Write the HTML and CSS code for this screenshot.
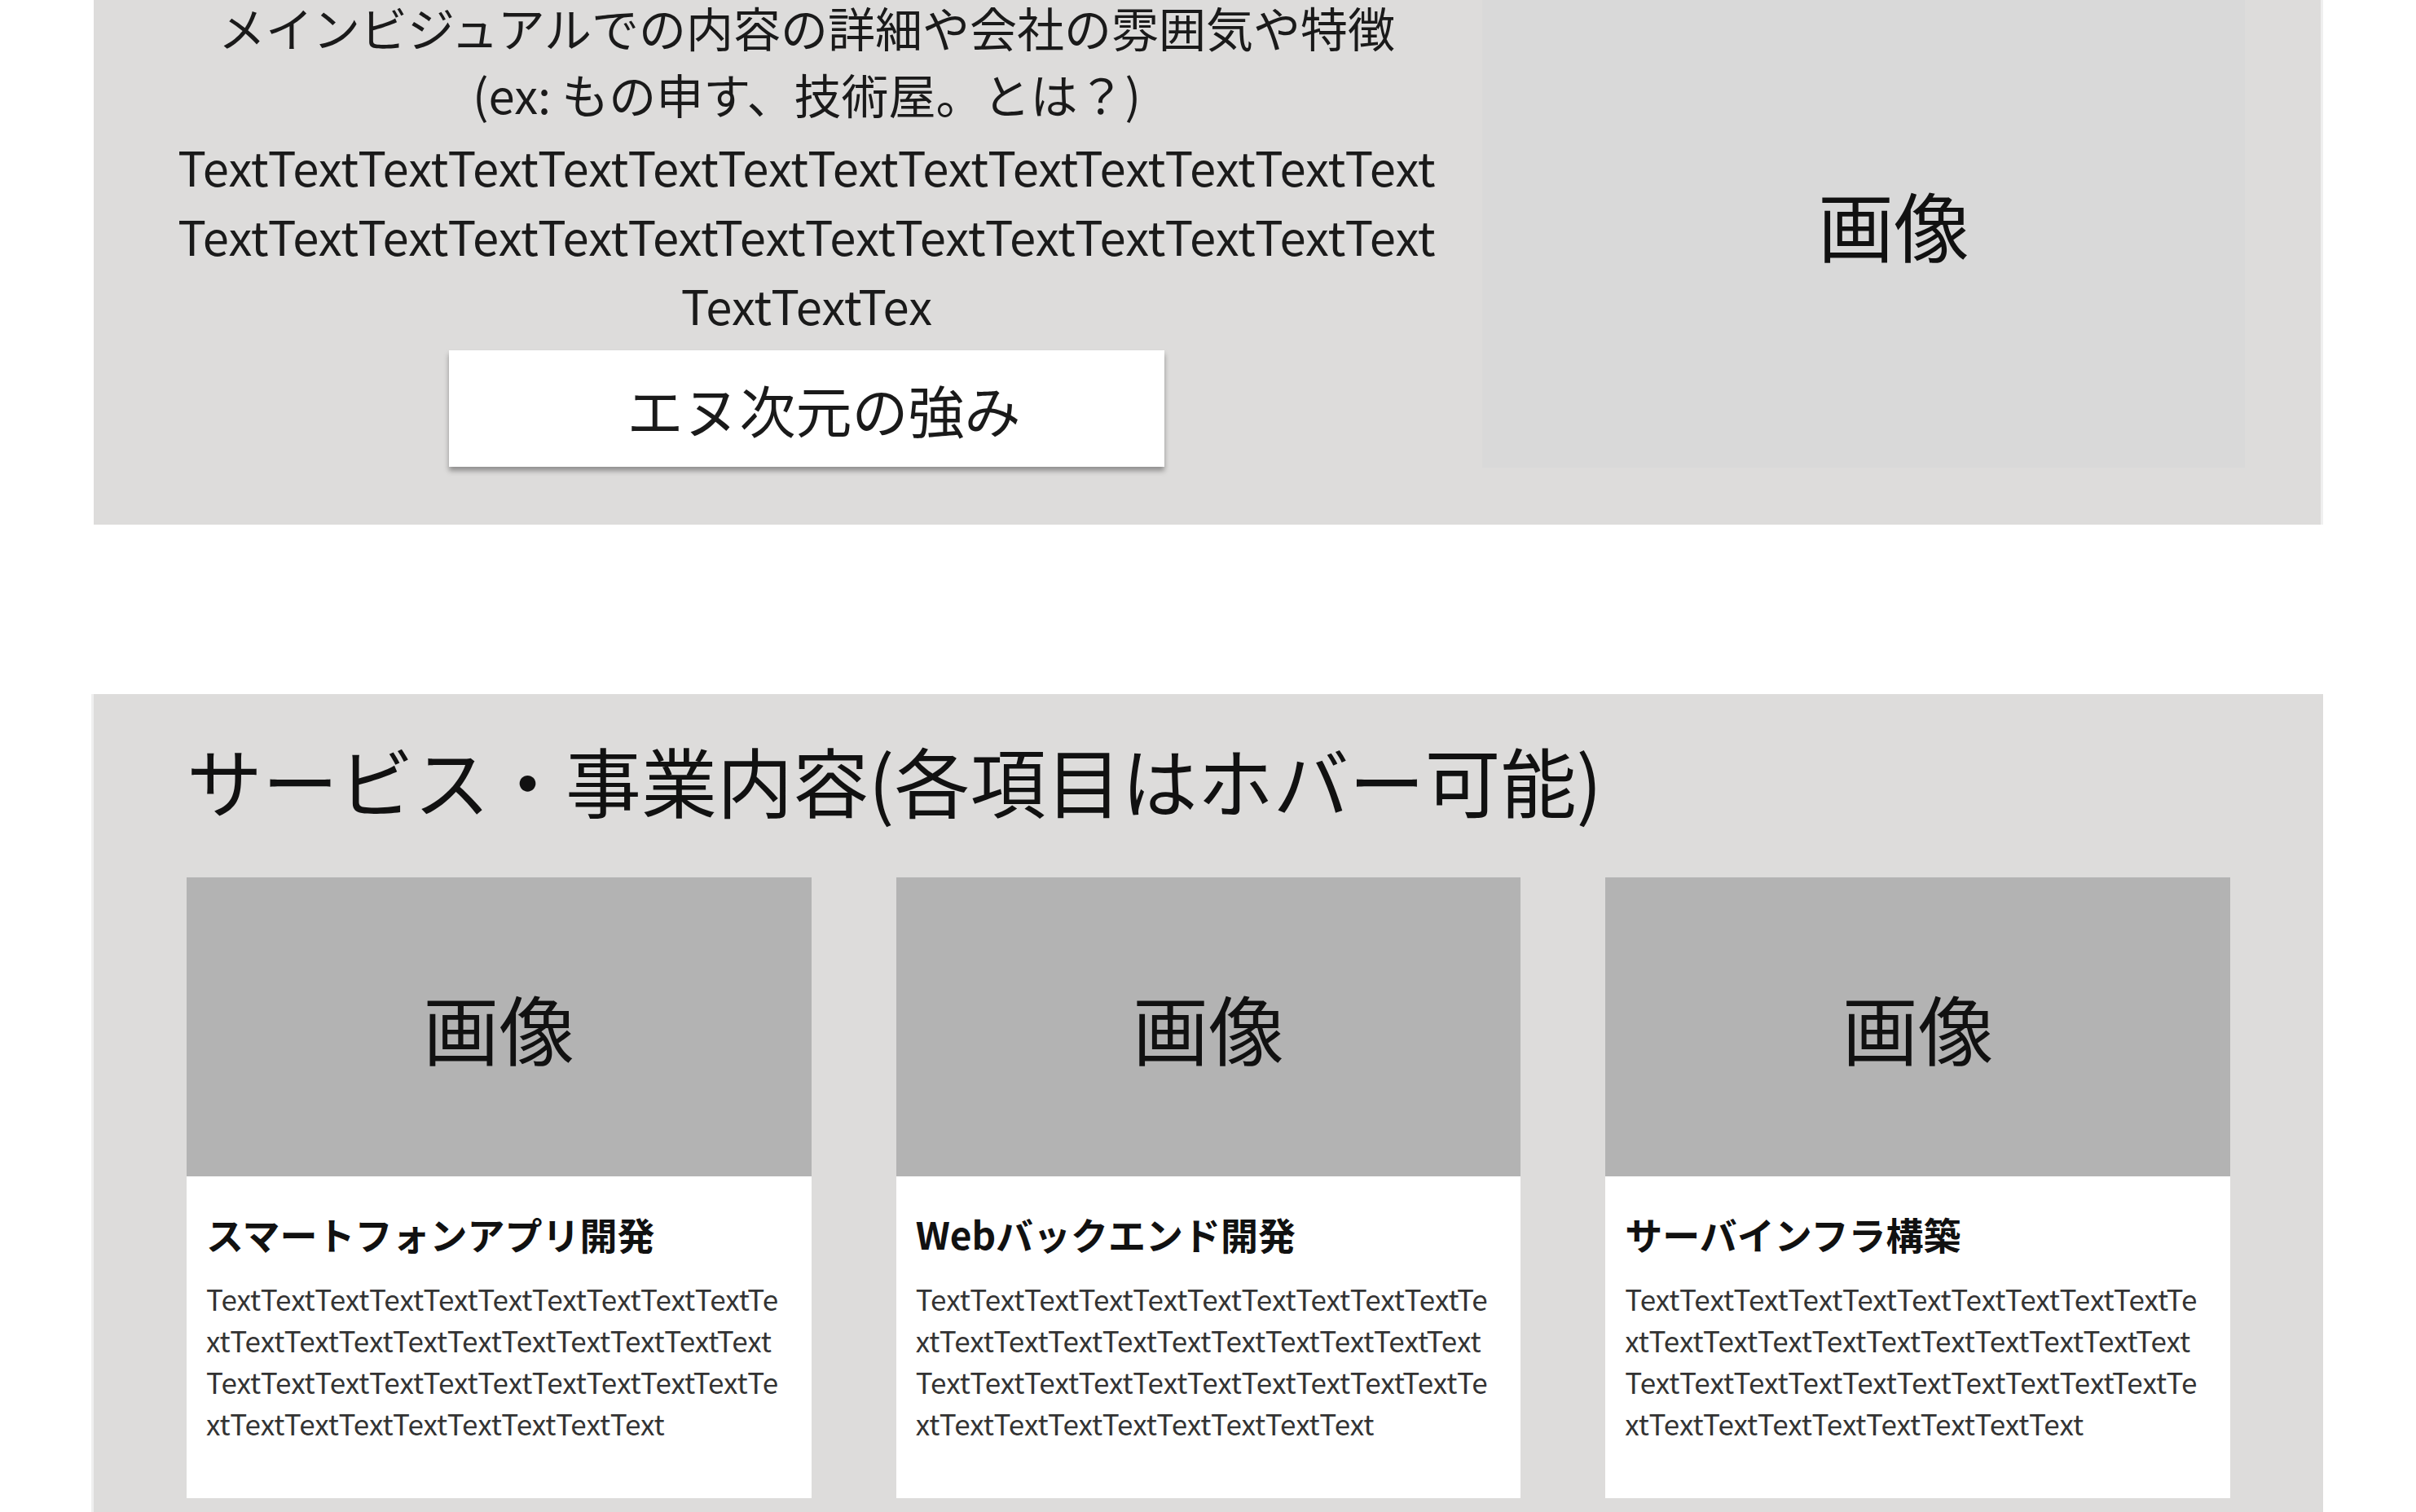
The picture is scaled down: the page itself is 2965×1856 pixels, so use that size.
FILE: index.html
```html
<!DOCTYPE html>
<html lang="ja">
<head>
<meta charset="utf-8">
<title>エヌ次元</title>
<link rel="stylesheet" href="styles.css">
</head>
<body>
<div class="page">
  <section class="hero">
    <div class="hero-text">
      <p class="lead lead-first">メインビジュアルでの内容の詳細や会社の雰囲気や特徴</p>
      <p class="lead lead-second">(ex: もの申す、技術屋。とは？)</p>
      <p class="lead lead-body">TextTextTextTextTextTextTextTextTextText TextTextTextTextTextTextTextTextTextText TextTextTextTextTextTextTextTextTextText Tex</p>
      <a class="btn">エヌ次元の強み</a>
    </div>
    <div class="hero-image">画像</div>
  </section>

  <section class="services">
    <h2 class="services-title">サービス・事業内容(各項目はホバー可能)</h2>
    <div class="cards">
      <article class="card">
        <div class="card-image">画像</div>
        <div class="card-body">
          <h3 class="card-title">スマートフォンアプリ開発</h3>
          <p class="card-text">TextTextTextTextTextTextTextTextTextText TextTextTextTextTextTextTextTextTextText TextTextTextTextTextTextTextTextTextText TextTextTextTextTextTextTextTextTextText</p>
        </div>
      </article>
      <article class="card">
        <div class="card-image">画像</div>
        <div class="card-body">
          <h3 class="card-title">Webバックエンド開発</h3>
          <p class="card-text">TextTextTextTextTextTextTextTextTextText TextTextTextTextTextTextTextTextTextText TextTextTextTextTextTextTextTextTextText TextTextTextTextTextTextTextTextTextText</p>
        </div>
      </article>
      <article class="card">
        <div class="card-image">画像</div>
        <div class="card-body">
          <h3 class="card-title">サーバインフラ構築</h3>
          <p class="card-text">TextTextTextTextTextTextTextTextTextText TextTextTextTextTextTextTextTextTextText TextTextTextTextTextTextTextTextTextText TextTextTextTextTextTextTextTextTextText</p>
        </div>
      </article>
    </div>
  </section>
</div>
</body>
</html>
```

FILE: styles.css
```css
html, body {
  margin: 0;
  padding: 0;
  background: #ffffff;
}

body {
  font-family: "Noto Sans CJK JP", "Noto Sans", sans-serif;
  color: #1a1a1a;
}

.page {
  padding: 0 114px 0 115px;
}

/* ---------- hero ---------- */
.hero {
  display: flex;
  gap: 49px;
  background: #dddcdb;
  padding: 0 93px 70px 95px;
  border-right: 3px solid #efefef;
}

.hero-text {
  flex: 1;
  min-width: 0;
  display: flex;
  flex-direction: column;
  align-items: center;
  text-align: center;
}

.lead {
  margin: 0;
  font-size: 58px;
  line-height: 85px;
}

.lead-first {
  line-height: 66px;
}

.lead-second {
  margin-top: 7px;
}

/* the source text is one unbroken run; the spaces in the markup are only
   there for readability, so collapse them away */
.lead-body,
.card-text {
  word-break: break-all;
  word-spacing: -0.3em;
}

.lead-body {
  margin-top: 4px;
}

.btn {
  box-sizing: border-box;
  margin-top: 13px;
  width: 878px;
  height: 143px;
  padding-left: 42px;
  display: flex;
  align-items: center;
  justify-content: center;
  background: #ffffff;
  box-shadow: 0 5px 6px rgba(0, 0, 0, 0.35);
  font-size: 69px;
  color: #1a1a1a;
}

.hero-image {
  box-sizing: border-box;
  width: 936px;
  height: 574px;
  padding-left: 74px;
  padding-bottom: 26px;
  display: flex;
  align-items: center;
  justify-content: center;
  background: #d9d9d9;
  font-size: 93px;
  color: #111;
}

/* ---------- services ---------- */
.services {
  margin-top: 208px;
  margin-left: -3px;
  background: #dddcdb;
  padding: 37px 114px 60px 114px;
  border-left: 3px solid #efefef;
}

.services-title {
  margin: 0;
  font-size: 93px;
  font-weight: 400;
  line-height: 136px;
  color: #111;
}

.cards {
  margin-top: 52px;
  display: grid;
  grid-template-columns: repeat(3, 1fr);
  gap: 104px;
}

.card {
  height: 762px;
  background: #ffffff;
}

.card-image {
  height: 367px;
  display: flex;
  align-items: center;
  justify-content: center;
  background: #b3b3b3;
  font-size: 93px;
  color: #111;
}

.card-body {
  padding: 36px 36px 0 24px;
}

.card-title {
  margin: 0;
  font-size: 46px;
  font-weight: 700;
  line-height: 68px;
  color: #111;
}

.card-text {
  margin: 20px 0 0 0;
  font-size: 35px;
  line-height: 51px;
  color: #333;
}
```
